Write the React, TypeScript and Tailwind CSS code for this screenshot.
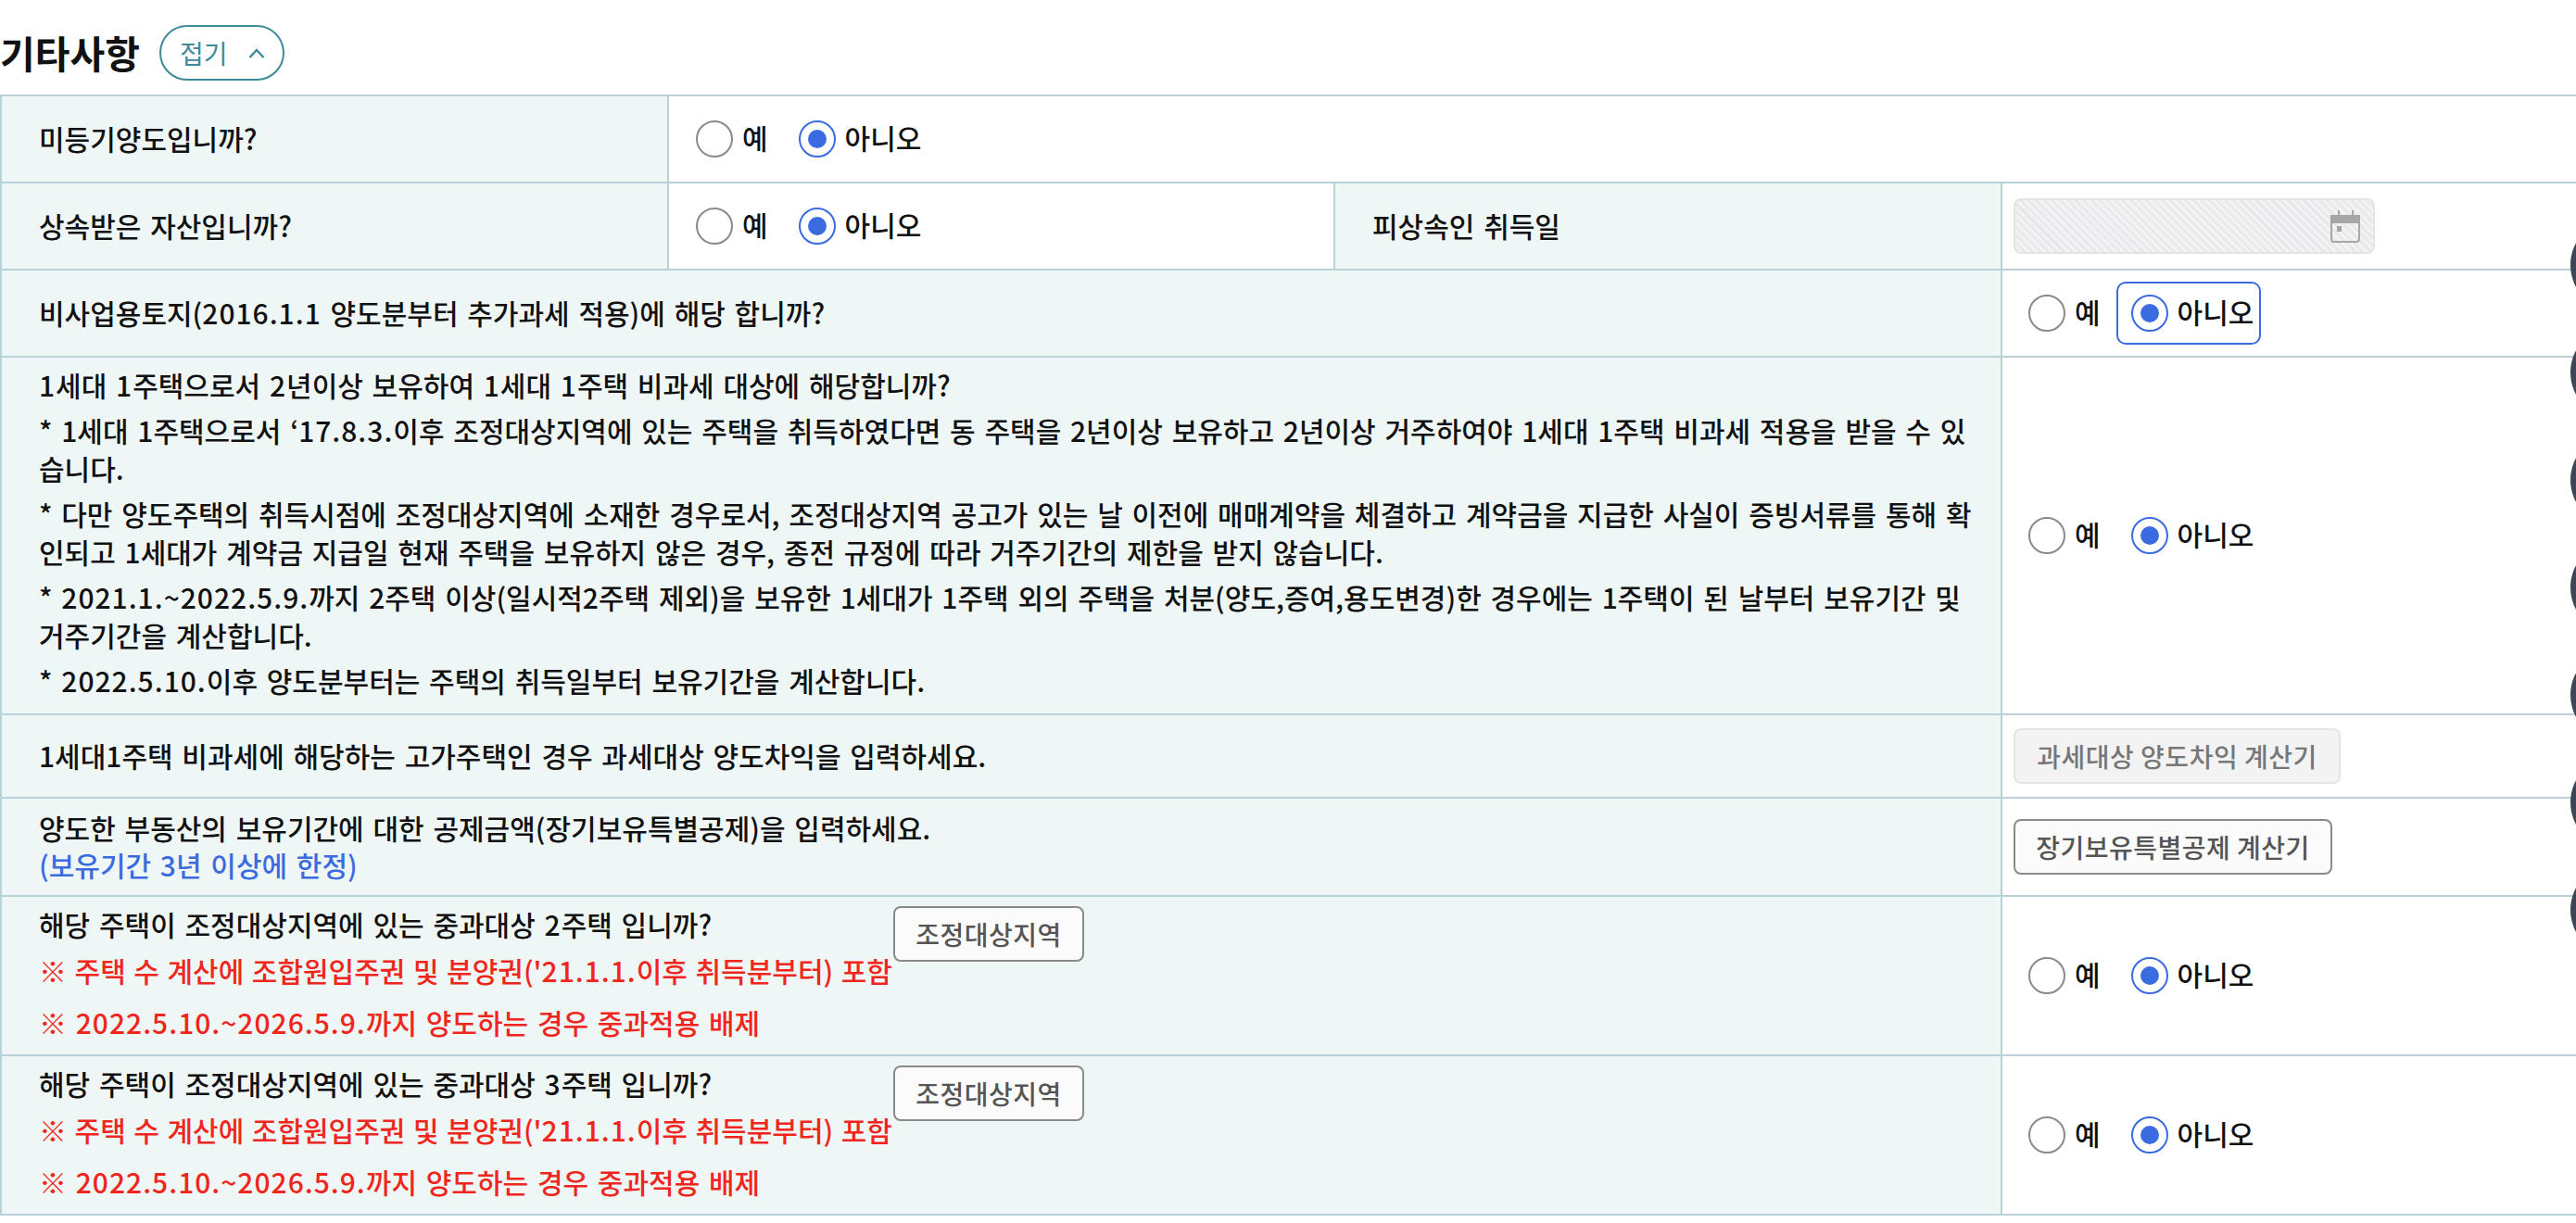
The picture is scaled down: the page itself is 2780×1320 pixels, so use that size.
import React from "react";

// digit runs sit a little wider in the reference font
function Num({ children }: { children: React.ReactNode }) {
  return <span className="tracking-[1px]">{children}</span>;
}

function Radio({ label, checked, focused }: { label: string; checked?: boolean; focused?: boolean }) {
  return (
    <label
      className={`flex h-[68px] items-center gap-[10px] rounded-[10px] border-2 pl-[14px] pr-[6px] ${
        focused ? "border-[#3b6be0]" : "border-transparent"
      }`}
    >
      {checked ? (
        <span className="flex h-[40px] w-[40px] items-center justify-center rounded-full border-2 border-[#3b6be0] bg-white">
          <span className="h-[20px] w-[20px] rounded-full bg-[#3b6be0]" />
        </span>
      ) : (
        <span className="h-[40px] w-[40px] rounded-full border-2 border-[#8a8a8a] bg-white" />
      )}
      <span className="mb-[3px]">{label}</span>
    </label>
  );
}

function YesNo({ focused }: { focused?: boolean }) {
  return (
    <div className="flex items-center gap-[9px] px-[12px]">
      <Radio label="예" />
      <Radio label="아니오" checked focused={focused} />
    </div>
  );
}

function CalendarIcon() {
  return (
    <svg width="32" height="35" viewBox="0 0 32 35" className="text-[#a6a6a6]">
      <path d="M9 0v6M24 0v6" stroke="currentColor" strokeWidth="2" fill="none" />
      <path d="M0 5h32v9H0z" fill="currentColor" />
      <rect x="1" y="6" width="30" height="28" rx="3" stroke="currentColor" strokeWidth="2" fill="none" />
      <rect x="7" y="17" width="5" height="6" fill="currentColor" />
    </svg>
  );
}

function Row({ height, children }: { height: string; children: React.ReactNode }) {
  return <div className={`flex border-t-2 border-[#b9d2d7] ${height}`}>{children}</div>;
}

function RegulatedRow({ count }: { count: number }) {
  return (
    <Row height="h-[172px]">
      <div className="flex w-[2161px] shrink-0 items-start border-x-2 border-[#b9d2d7] bg-[#eff7f6] pl-[40px] pt-[9px]">
        <div>
          <p className="h-[41px] leading-[41px]">해당 주택이 조정대상지역에 있는 중과대상 <Num>{count}</Num>주택 입니까?</p>
          <p className="mt-[9px] h-[41px] leading-[41px] text-[#f0261c] [word-spacing:1.8px]">
            ※ 주택 수 계산에 조합원입주권 및 분양권('<Num>21.1.1.</Num>이후 취득분부터) 포함
          </p>
          <p className="mt-[15px] h-[41px] leading-[41px] text-[#f0261c]">
            ※ <Num>2022.5.10.~2026.5.9.</Num>까지 양도하는 경우 중과적용 배제
          </p>
        </div>
        <button className="ml-[1px] mt-[1px] h-[60px] w-[206px] rounded-[8px] border-2 border-[#8a8a8a] bg-[#fbfbfb] text-[28px] tracking-[0.5px] text-[#555]">
          조정대상지역
        </button>
      </div>
      <div className="flex flex-1 items-center">
        <YesNo />
      </div>
    </Row>
  );
}

export default function App() {
  return (
    <div className="relative h-[1320px] w-[2780px] overflow-hidden bg-white font-['Noto_Sans_CJK_KR',sans-serif] text-[30px] font-medium text-[#111] [word-spacing:3px]">
      <div className="flex h-[102px] items-start gap-[21px] pt-[27px]">
        <h2 className="h-[58px] text-[41px] font-bold leading-[58px]">기타사항</h2>
        <button className="flex h-[60px] w-[135px] items-center rounded-full border-2 border-[#3d8a99] pl-[20px] text-[28px] font-normal text-[#3d8a99]">
          접기
          <svg width="18" height="11" viewBox="0 0 18 11" className="ml-[23px]">
            <path d="M1.5 10L9 2l7.5 8" stroke="currentColor" strokeWidth="2.4" fill="none" />
          </svg>
        </button>
      </div>

      <Row height="h-[94px]">
        <div className="flex w-[722px] shrink-0 items-center border-x-2 border-[#b9d2d7] bg-[#eff7f6] pb-[2px] pl-[40px]">
          미등기양도입니까?
        </div>
        <div className="flex flex-1 items-center pl-[1px]">
          <YesNo />
        </div>
      </Row>

      <Row height="h-[94px]">
        <div className="flex w-[722px] shrink-0 items-center border-x-2 border-[#b9d2d7] bg-[#eff7f6] pb-[2px] pl-[40px]">
          상속받은 자산입니까?
        </div>
        <div className="flex w-[717px] shrink-0 items-center pl-[1px]">
          <YesNo />
        </div>
        <div className="flex w-[722px] shrink-0 items-center border-x-2 border-[#b9d2d7] bg-[#eff7f6] pb-[2px] pl-[40px]">
          피상속인 취득일
        </div>
        <div className="flex flex-1 items-center pl-[12px]">
          <div className="flex h-[60px] w-[390px] items-center justify-end rounded-[8px] border-2 border-[#e4e4e7] bg-[repeating-linear-gradient(45deg,#e9e9ec,#e9e9ec_3px,#f3f3f4_3px,#f3f3f4_6px)] pr-[14px]">
            <CalendarIcon />
          </div>
        </div>
      </Row>

      <Row height="h-[94px]">
        <div className="flex w-[2161px] shrink-0 items-center border-x-2 border-[#b9d2d7] bg-[#eff7f6] pb-[2px] pl-[40px]">
          <span>비사업용토지(<Num>2016.1.1</Num> 양도분부터 추가과세 적용)에 해당 합니까?</span>
        </div>
        <div className="flex flex-1 items-center">
          <YesNo focused />
        </div>
      </Row>

      <Row height="h-[386px]">
        <div className="flex w-[2161px] shrink-0 flex-col gap-[8px] border-x-2 border-[#b9d2d7] bg-[#eff7f6] pl-[40px] pt-[9px] leading-[41px]">
          <p>
            <Num>1</Num>세대 <Num>1</Num>주택으로서 <Num>2</Num>년이상 보유하여 <Num>1</Num>세대 <Num>1</Num>주택 비과세 대상에 해당합니까?
          </p>
          <p>
            * 1세대 1주택으로서 ‘<Num>17.8.3.</Num>이후 조정대상지역에 있는 주택을 취득하였다면 동 주택을 2년이상 보유하고 2년이상 거주하여야 1세대 1주택 비과세 적용을 받을 수 있
            <br />
            습니다.
          </p>
          <p>
            * 다만 양도주택의 취득시점에 조정대상지역에 소재한 경우로서, 조정대상지역 공고가 있는 날 이전에 매매계약을 체결하고 계약금을 지급한 사실이 증빙서류를 통해 확
            <br />
            인되고 1세대가 계약금 지급일 현재 주택을 보유하지 않은 경우, 종전 규정에 따라 거주기간의 제한을 받지 않습니다.
          </p>
          <p>
            * <Num>2021.1.~2022.5.9.</Num>까지 2주택 이상(일시적2주택 제외)을 보유한 1세대가 1주택 외의 주택을 처분(양도,증여,용도변경)한 경우에는 1주택이 된 날부터 보유기간 및
            <br />
            거주기간을 계산합니다.
          </p>
          <p>* <Num>2022.5.10.</Num>이후 양도분부터는 주택의 취득일부터 보유기간을 계산합니다.</p>
        </div>
        <div className="flex flex-1 items-center">
          <YesNo />
        </div>
      </Row>

      <Row height="h-[90px]">
        <div className="flex w-[2161px] shrink-0 items-center border-x-2 border-[#b9d2d7] bg-[#eff7f6] pb-[2px] pl-[40px]">
          1세대1주택 비과세에 해당하는 고가주택인 경우 과세대상 양도차익을 입력하세요.
        </div>
        <div className="flex flex-1 items-center pl-[12px]">
          <button className="h-[60px] w-[353px] rounded-[8px] border-2 border-[#e5e5e5] bg-[#f3f3f3] text-[28px] tracking-[0.5px] text-[#777]">
            과세대상 양도차익 계산기
          </button>
        </div>
      </Row>

      <Row height="h-[106px]">
        <div className="flex w-[2161px] shrink-0 flex-col justify-center border-x-2 border-[#b9d2d7] bg-[#eff7f6] pb-[3px] pl-[40px] leading-[40px]">
          <p>양도한 부동산의 보유기간에 대한 공제금액(장기보유특별공제)을 입력하세요.</p>
          <p className="text-[#3b6be0]">(보유기간 3년 이상에 한정)</p>
        </div>
        <div className="flex flex-1 items-center pl-[12px]">
          <button className="h-[60px] w-[344px] rounded-[8px] border-2 border-[#8a8a8a] bg-[#fbfbfb] text-[28px] tracking-[0.5px] text-[#555]">
            장기보유특별공제 계산기
          </button>
        </div>
      </Row>

      <RegulatedRow count={2} />
      <RegulatedRow count={3} />
      <div className="border-t-2 border-[#b9d2d7]" />

      {/* floating side buttons, only their left edge is on screen */}
      <div className="absolute left-[2774px] top-[236px] flex flex-col gap-[16px]">
        {[0, 1, 2, 3, 4, 5, 6].map((i) => (
          <div key={i} className="h-[100px] w-[100px] rounded-full bg-[#3d4655]" />
        ))}
      </div>
    </div>
  );
}
